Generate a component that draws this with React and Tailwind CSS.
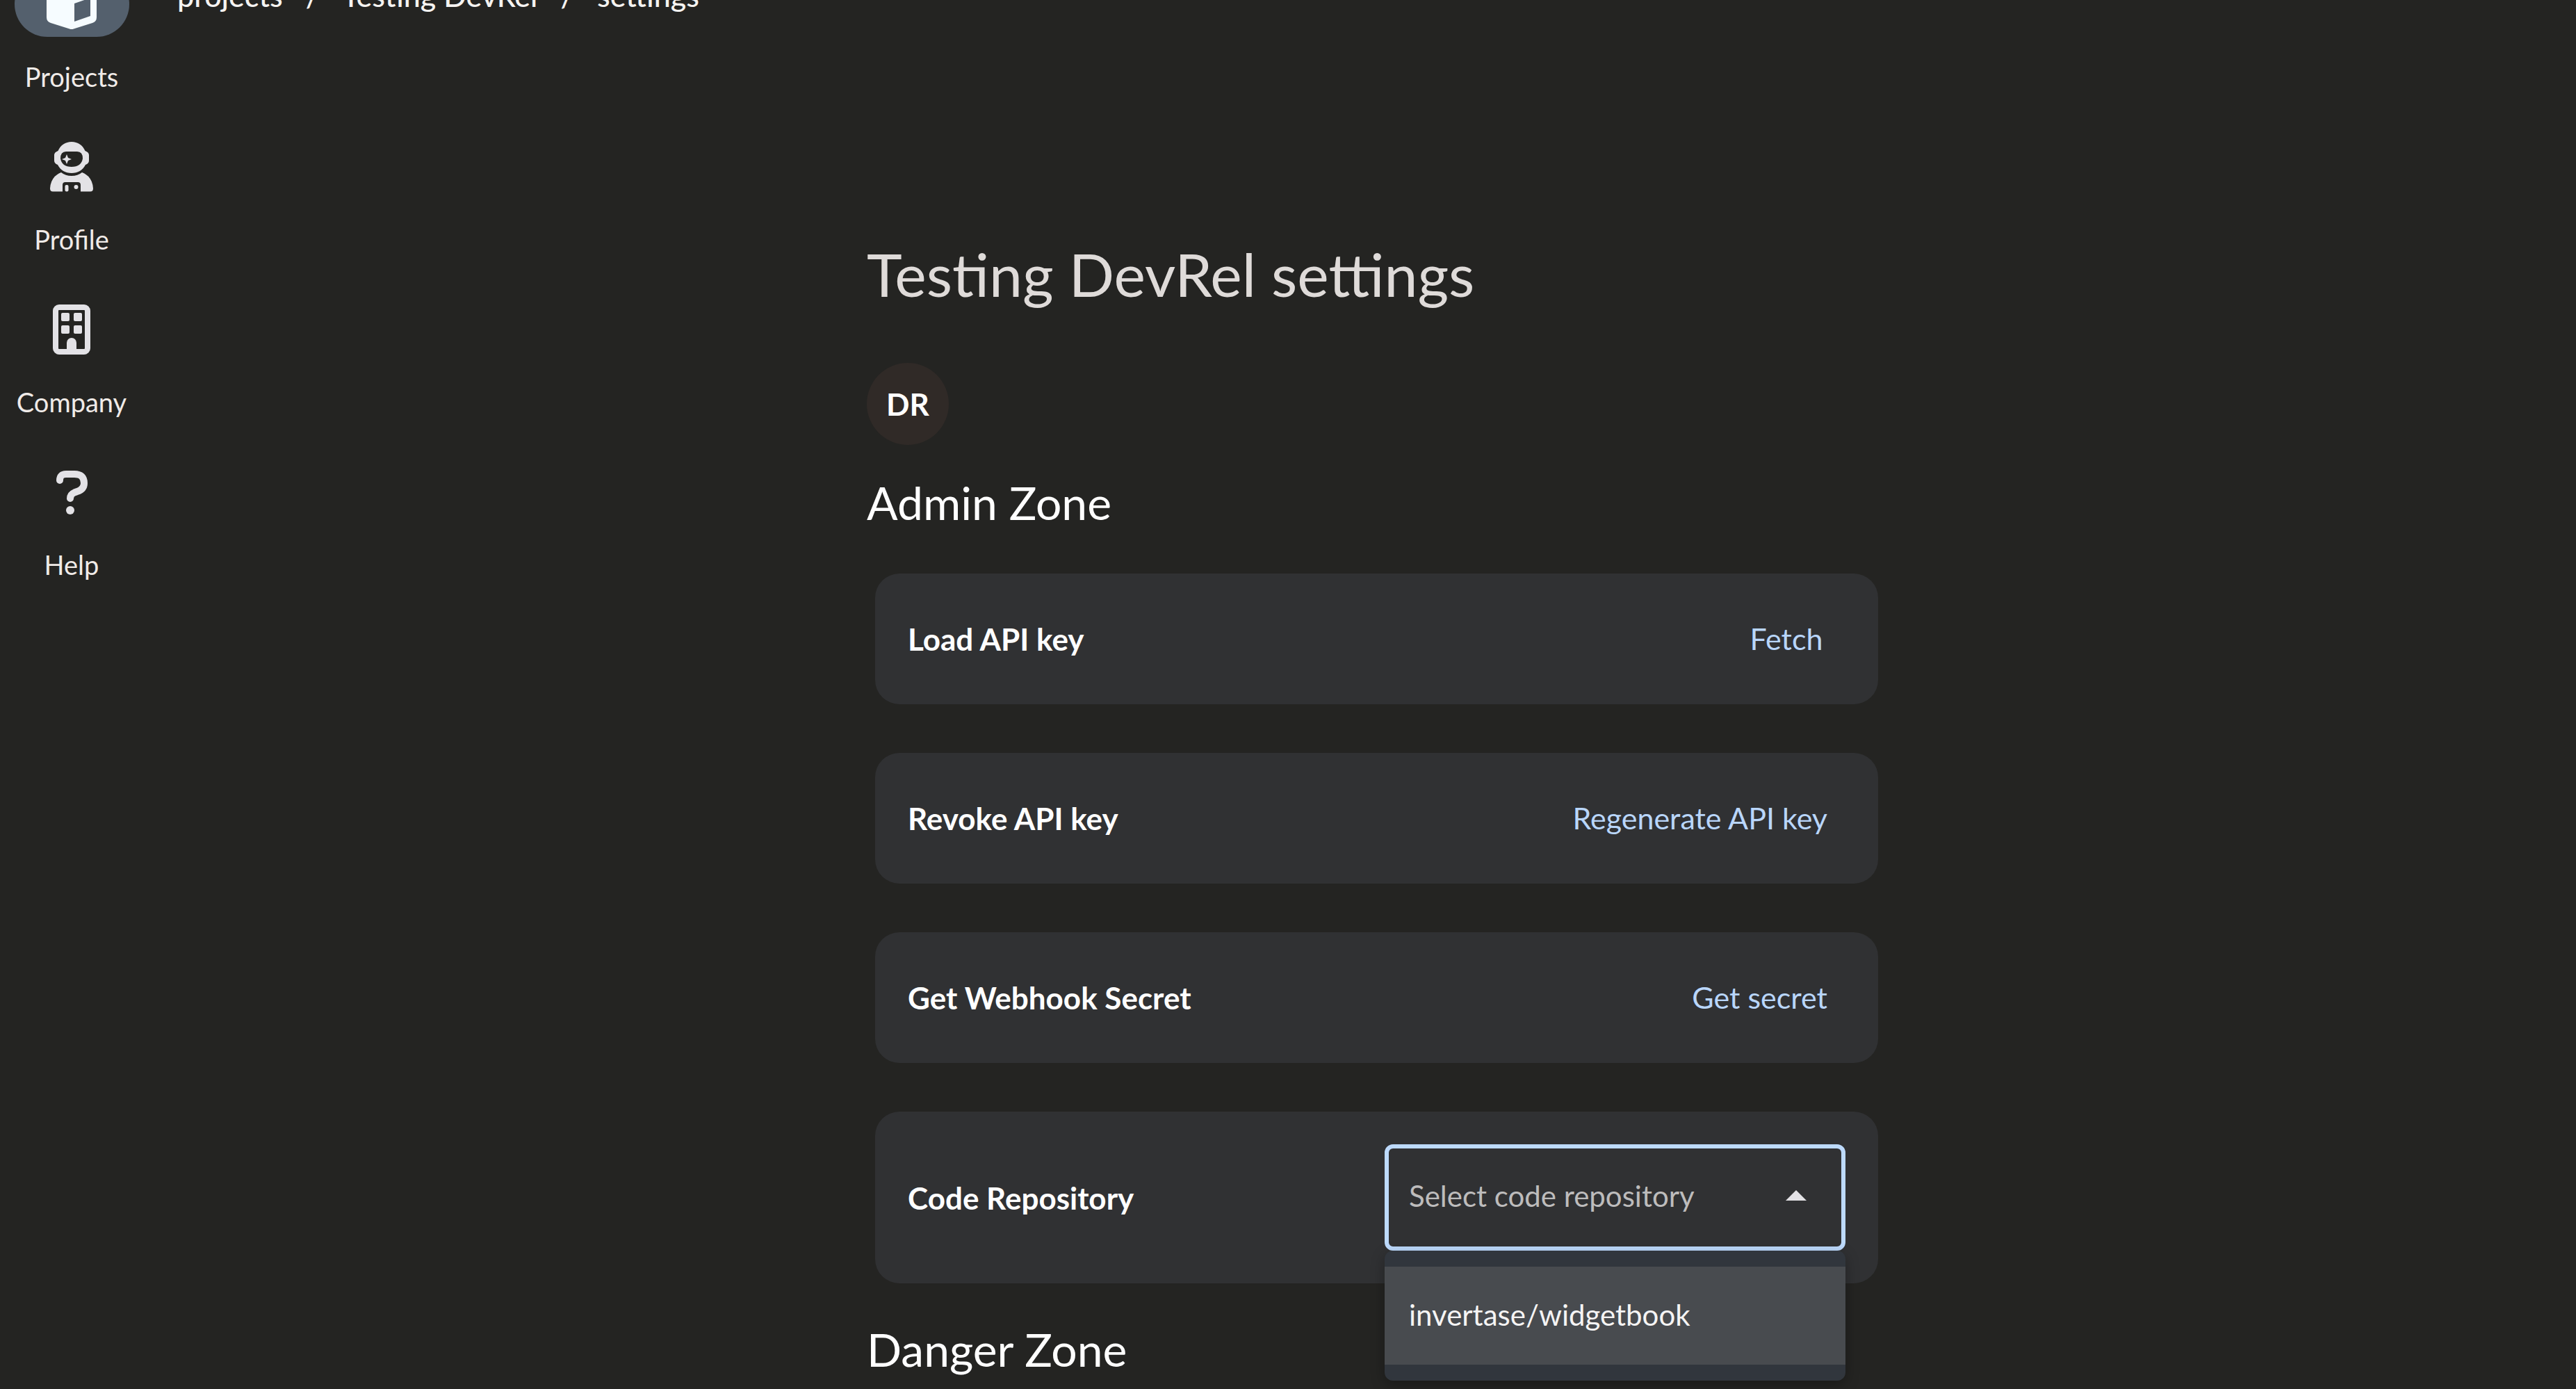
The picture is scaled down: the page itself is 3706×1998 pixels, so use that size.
import { useState } from "react";

function BoxIcon() {
  return (
    <svg viewBox="0 0 72 72" className="size-[72px]" fill="currentColor" aria-hidden="true">
      <path
        fillRule="evenodd"
        d="M36 0 L66 11 Q72 13 72 20 V55 Q72 61 66 63 L39 71.5 Q36 72.500 33 71.5 L6 63 Q0 61 0 55 V20 Q0 13 6 11 Z M40 35 V61 L63 53 V27 Z"
      />
    </svg>
  );
}

function AstronautIcon() {
  return (
    <svg viewBox="0 0 72 72" className="size-[72px]" fill="currentColor" aria-hidden="true">
      <path
        fillRule="evenodd"
        d="M36 0 C45 0 52 5 55.500 13 Q61 15 61 19 V27 Q61 31 56 33 C52 41 45 45 36 45 C27 45 20 41 16 33 Q11 31 11 27 V19 Q11 15 16.500 13 C20 5 27 0 36 0 Z M28 14 Q20 14 20 24 Q22 36 36 36 Q50 36 52 24 Q52 14 44 14 Z"
      />
      <path d="M29 18 L31 23 L36 25 L31 27 L29 32 L27 27 L22 25 L27 23 Z" />
      <path d="M21 44 Q27 49 36 49 Q45 49 51 44 Q66 50 67 67 Q67 71.500 63 71.500 H49 V62 Q49 58 45 58 H27 Q23 58 23 62 V71.500 H9 Q5 71.500 5 67 Q6 50 21 44 Z" />
      <rect x="26.500" y="62" width="5" height="9.500" rx="2" />
      <circle cx="42.500" cy="65" r="3" />
    </svg>
  );
}

function BuildingIcon() {
  return (
    <svg viewBox="0 0 72 72" className="size-[72px]" fill="currentColor" aria-hidden="true">
      <rect x="13" y="4" width="46" height="64" rx="5" fill="none" stroke="currentColor" strokeWidth="8" />
      <rect x="21" y="12" width="12" height="12" rx="2" />
      <rect x="39" y="12" width="12" height="12" rx="2" />
      <rect x="21" y="30" width="12" height="12" rx="2" />
      <rect x="39" y="30" width="12" height="12" rx="2" />
      <path d="M29 66 V55 a7 7 0 0 1 14 0 V66 Z" />
    </svg>
  );
}

function HelpIcon() {
  return (
    <svg viewBox="0 0 72 72" className="size-[72px]" fill="none" aria-hidden="true">
      <path
        d="M19 19 Q19 10 28 10 H40 Q54 10 54 23 Q54 32 44 35 L40 36.500 Q34 39 34 45"
        stroke="currentColor"
        strokeWidth="10"
        strokeLinecap="round"
        strokeLinejoin="round"
      />
      <circle cx="34" cy="62" r="6" fill="currentColor" />
    </svg>
  );
}

const navItems = [
  { label: "Projects", Icon: BoxIcon, active: true },
  { label: "Profile", Icon: AstronautIcon },
  { label: "Company", Icon: BuildingIcon },
  { label: "Help", Icon: HelpIcon },
];

function NavRail() {
  return (
    <nav className="-mt-[41px] flex w-[206px] shrink-0 flex-col gap-[59px]">
      {navItems.map(({ label, Icon, active }) => (
        <a key={label} href="#" className="flex flex-col items-center gap-[33px]">
          <span
            className={
              active
                ? "flex h-[94px] w-[165px] items-center justify-center rounded-full bg-[#54606d] text-[#f6fcff]"
                : "flex h-[94px] w-[165px] items-center justify-center rounded-full text-[#e3e2e6]"
            }
          >
            <Icon />
          </span>
          <span className="text-[38px] leading-[48px] text-[#f0ebe8]">{label}</span>
        </a>
      ))}
    </nav>
  );
}

const crumbs = ["projects", "Testing DevRel", "settings"];

function Breadcrumbs() {
  return (
    <nav aria-label="Breadcrumb" className="-mt-[32px] pl-[12px]">
      <ol className="flex gap-[33px] text-[43px] leading-[52px] font-medium text-[#f5f3f1]">
        {crumbs.map((crumb, i) => (
          <li key={crumb} className="flex gap-[33px]">
            {i > 0 && <span aria-hidden="true">/</span>}
            <a href="#">{crumb}</a>
          </li>
        ))}
      </ol>
    </nav>
  );
}

function ActionCard({ title, action }) {
  return (
    <div className="flex h-[188px] items-center justify-between rounded-[35px] bg-[#303133] pr-[38px] pl-[47px]">
      <h3 className="text-[44px] leading-[56px] font-bold text-white">{title}</h3>
      <button type="button" className="min-w-[188px] px-[35px] text-[43px] leading-[56px] text-[#b9d6fb]">
        {action}
      </button>
    </div>
  );
}

function RepositoryPicker() {
  const [open, setOpen] = useState(true);
  const [value, setValue] = useState("");
  return (
    <div className="relative w-[663px]">
      <button
        type="button"
        role="combobox"
        aria-labelledby="repository-label"
        aria-expanded={open}
        aria-controls="repository-options"
        onClick={() => setOpen(!open)}
        className="flex h-[153px] w-full items-center justify-between rounded-[12px] border-[6px] border-[#bddafd] pr-[50px] pb-[6px] pl-[29px] text-[42px] leading-[56px] text-[#bdbcbc]"
      >
        {value || "Select code repository"}
        <svg viewBox="0 0 30 15" className="h-[15px] w-[30px]" fill="#e3e2e6" aria-hidden="true">
          <path d="M0 15 L15 0 L30 15 Z" />
        </svg>
      </button>
      {open && (
        <ul
          id="repository-options"
          role="listbox"
          className="absolute top-full left-0 w-full rounded-[12px] bg-[#31363d] py-[23px] shadow-[0_6px_20px_rgba(0,0,0,0.3)]"
        >
          <li role="option" aria-selected={value !== ""}>
            <button
              type="button"
              onClick={() => {
                setValue("invertase/widgetbook");
                setOpen(false);
              }}
              className="h-[141px] w-full bg-[#484b4f] px-[35px] pb-[4px] text-left text-[42px] leading-[56px] text-[#f5f4f4]"
            >
              invertase/widgetbook
            </button>
          </li>
        </ul>
      )}
    </div>
  );
}

export default function App() {
  return (
    <div className="flex h-screen gap-[37px] overflow-hidden bg-[#242422] font-['Lato','Noto_Sans',sans-serif]">
      <NavRail />
      <div className="min-w-0 flex-1">
        <Breadcrumbs />
        <main className="mx-auto w-full max-w-[1455px] pt-[322px]">
          <h1 className="text-[86px] leading-[104px] text-[#dfdbd9]">Testing DevRel settings</h1>
          <div className="mt-[76px] flex size-[118px] items-center justify-center rounded-full bg-[#302a27] text-[44px] leading-[56px] font-bold text-white">
            DR
          </div>
          <h2 className="mt-[41px] text-[66px] leading-[84px] text-white">Admin Zone</h2>
          <div className="mt-[60px] flex flex-col gap-[70px] pl-[12px]">
            <ActionCard title="Load API key" action="Fetch" />
            <ActionCard title="Revoke API key" action="Regenerate API key" />
            <ActionCard title="Get Webhook Secret" action="Get secret" />
            <div className="flex items-center justify-between rounded-[35px] bg-[#303133] p-[47px]">
              <h3 id="repository-label" className="text-[44px] leading-[56px] font-bold text-white">
                Code Repository
              </h3>
              <RepositoryPicker />
            </div>
          </div>
          <h2 className="mt-[53px] text-[66px] leading-[84px] text-white">Danger Zone</h2>
        </main>
      </div>
    </div>
  );
}
